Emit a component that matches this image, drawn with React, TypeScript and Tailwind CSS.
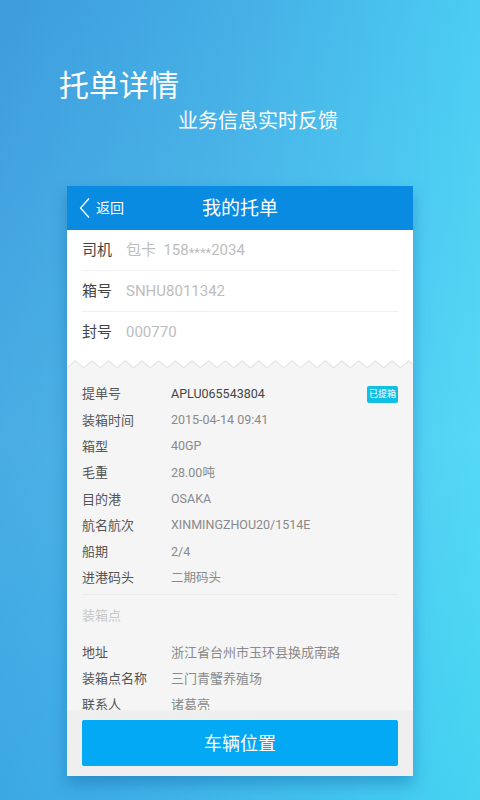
import React from "react";

const font = { fontFamily: 'Roboto, "Noto Sans CJK SC", "Noto Sans", sans-serif' };

function Zigzag() {
  const w = 346;
  const period = 16.67;
  const pts: string[] = [];
  pts.push(`0,0`);
  for (let x = 0; x <= w + period; x += period) {
    pts.push(`${x.toFixed(2)},8`);
    pts.push(`${(x + period / 2).toFixed(2)},1`);
  }
  pts.push(`${w},0`);
  const line = pts.slice(1, -1).join(" ");
  return (
    <svg width={w} height={9} className="block" viewBox={`0 0 ${w} 9`}>
      <rect x="0" y="0" width={w} height="9" fill="#f5f5f5" />
      <polyline points={line} fill="none" stroke="#e2e2e2" strokeWidth="2.5" strokeLinejoin="round" opacity="0.8" />
      <polygon points={pts.join(" ")} fill="#ffffff" />
    </svg>
  );
}

const details: [string, string, boolean?][] = [
  ["提单号", "APLU065543804", true],
  ["装箱时间", "2015-04-14 09:41"],
  ["箱型", "40GP"],
  ["毛重", "28.00吨"],
  ["目的港", "OSAKA"],
  ["航名航次", "XINMINGZHOU20/1514E"],
  ["船期", "2/4"],
  ["进港码头", "二期码头"],
];

const place: [string, string][] = [
  ["地址", "浙江省台州市玉环县换成南路"],
  ["装箱点名称", "三门青蟹养殖场"],
  ["联系人", "诸葛亮"],
];

export default function App() {
  return (
    <div
      className="relative w-[480px] h-[800px] overflow-hidden bg-[linear-gradient(100deg,#3d9cdc_0%,#45b0e6_40%,#4bcdf2_78%,#4ee2f5_100%)]"
      style={font}
    >
      <div className="absolute inset-0 bg-[linear-gradient(180deg,rgba(255,255,255,0)_0%,rgba(120,220,250,0.18)_55%,rgba(40,170,230,0.25)_100%)]" />
      <div className="relative flex flex-col">
        <div className="pt-[67px] pl-[59px] text-[30px] leading-[38px] text-white">托单详情</div>
        <div className="pl-[178px] text-[20px] leading-[26px] text-white mt-[3px]">业务信息实时反馈</div>

        <div className="ml-[67px] mt-[52px] w-[346px] h-[590px] flex flex-col bg-[#f5f5f5] shadow-[0_8px_14px_rgba(10,80,150,0.35)]">
          {/* header */}
          <div className="relative h-[44px] bg-[#0a8be2] flex items-center justify-center text-white">
            <div className="absolute left-[12px] top-0 h-[44px] flex items-center gap-[5px]">
              <svg width="12" height="22" viewBox="0 0 12 22">
                <polyline points="10,1.5 1.5,11 10,20.5" fill="none" stroke="#ffffff" strokeWidth="1.3" />
              </svg>
              <span className="text-[14px] leading-none">返回</span>
            </div>
            <span className="text-[19px] leading-none">我的托单</span>
          </div>

          {/* white section */}
          <div className="bg-white px-[15px] pt-[1px] pb-[7px]">
            <div className="h-[40px] flex items-center border-b border-[#f0f0f0] text-[15px]">
              <span className="w-[44px] text-[#444]">司机</span>
              <span className="text-[#bdbdbd]">包卡&nbsp;&nbsp;158<span className="text-[13px] relative top-[2px]">****</span>2034</span>
            </div>
            <div className="h-[41px] flex items-center border-b border-[#f0f0f0] text-[15px]">
              <span className="w-[44px] text-[#444]">箱号</span>
              <span className="text-[#bdbdbd]">SNHU8011342</span>
            </div>
            <div className="h-[40px] flex items-center text-[15px]">
              <span className="w-[44px] text-[#444]">封号</span>
              <span className="text-[#bdbdbd]">000770</span>
            </div>
          </div>
          <Zigzag />

          {/* gray section */}
          <div className="flex-1 overflow-hidden px-[15px] pt-[13px] text-[13px]">
            {details.map(([k, v, badge]) => (
              <div key={k} className="h-[26.3px] flex items-center">
                <span className="w-[89px] text-[#555]">{k}</span>
                <span className={badge ? "text-[#444] flex-1 text-[12.5px]" : "text-[#8a8a8a] flex-1 text-[12.5px]"}>{v}</span>
                {badge && (
                  <span className="h-[17px] w-[31px] rounded-[2px] bg-[#12bfe4] text-white text-[9px] leading-[17px] text-center">
                    已提箱
                  </span>
                )}
              </div>
            ))}
            <div className="mt-[2.5px] border-t border-[#ebebeb]" />
            <div className="h-[41px] flex items-center text-[#c8c8c8]">装箱点</div>
            <div className="pt-[4px]">
              {place.map(([k, v]) => (
                <div key={k} className="h-[26px] flex items-center">
                  <span className="w-[89px] text-[#555]">{k}</span>
                  <span className="text-[#8a8a8a]">{v}</span>
                </div>
              ))}
            </div>
          </div>

          {/* footer */}
          <div className="h-[66px] bg-[#efefef] px-[15px] pt-[10px]">
            <div className="h-[46px] rounded-[2px] bg-[#03a9f4] flex items-center justify-center text-white text-[18px]">
              车辆位置
            </div>
          </div>
        </div>
      </div>
    </div>
  );
}
